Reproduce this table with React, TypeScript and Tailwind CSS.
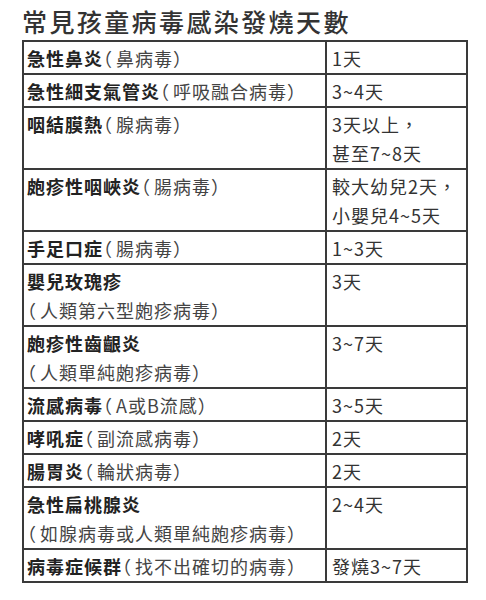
import React from "react";

type Row = { name: string; paren: string; parenBreak?: boolean; days: string[] };

const rows: Row[] = [
  { name: "急性鼻炎", paren: "鼻病毒", days: ["1天"] },
  { name: "急性細支氣管炎", paren: "呼吸融合病毒", days: ["3~4天"] },
  { name: "咽結膜熱", paren: "腺病毒", days: ["3天以上，", "甚至7~8天"] },
  { name: "皰疹性咽峽炎", paren: "腸病毒", days: ["較大幼兒2天，", "小嬰兒4~5天"] },
  { name: "手足口症", paren: "腸病毒", days: ["1~3天"] },
  { name: "嬰兒玫瑰疹", paren: "人類第六型皰疹病毒", parenBreak: true, days: ["3天"] },
  { name: "皰疹性齒齦炎", paren: "人類單純皰疹病毒", parenBreak: true, days: ["3~7天"] },
  { name: "流感病毒", paren: "A或B流感", days: ["3~5天"] },
  { name: "哮吼症", paren: "副流感病毒", days: ["2天"] },
  { name: "腸胃炎", paren: "輪狀病毒", days: ["2天"] },
  { name: "急性扁桃腺炎", paren: "如腺病毒或人類單純皰疹病毒", parenBreak: true, days: ["2~4天"] },
  { name: "病毒症候群", paren: "找不出確切的病毒", days: ["發燒3~7天"] },
];

export default function App() {
  return (
    <div
      className="w-[486px] h-[600px] bg-white text-[#2b2b2b]"
      style={{ fontFamily: '"Noto Sans CJK TC", "Noto Sans CJK SC", sans-serif' }}
    >
      <div className="pl-[22px] pt-[2px]">
        <div className="h-[38px] flex items-center text-[25px] font-medium tracking-[2.4px] text-[#333] leading-none">
          常見孩童病毒感染發燒天數
        </div>
        <table className="w-[444px] table-fixed border-collapse border-2 border-[#3a3a3a] text-[18px] tracking-[1px] leading-[29px]">
          <colgroup>
            <col className="w-[303px]" />
            <col className="w-[141px]" />
          </colgroup>
          <tbody>
            {rows.map((r, i) => (
              <tr key={i}>
                <td className="border-2 border-[#3a3a3a] align-top pl-[3px] pr-0 pt-[2px] pb-0 whitespace-nowrap">
                  <span className="font-bold text-[#222]">{r.name}</span>
                  {r.parenBreak ? <br /> : null}
                  <span className="text-[#444]">
                    <span className="[font-feature-settings:'halt'] mr-[3px]">（</span>
                    {r.paren}
                    <span className="[font-feature-settings:'halt']">）</span>
                  </span>
                </td>
                <td className="border-2 border-[#3a3a3a] align-top pl-[5px] pr-0 pt-[2px] pb-0 whitespace-nowrap text-[#333]">
                  {r.days.map((d, j) => (
                    <div key={j}>{d}</div>
                  ))}
                </td>
              </tr>
            ))}
          </tbody>
        </table>
      </div>
    </div>
  );
}
